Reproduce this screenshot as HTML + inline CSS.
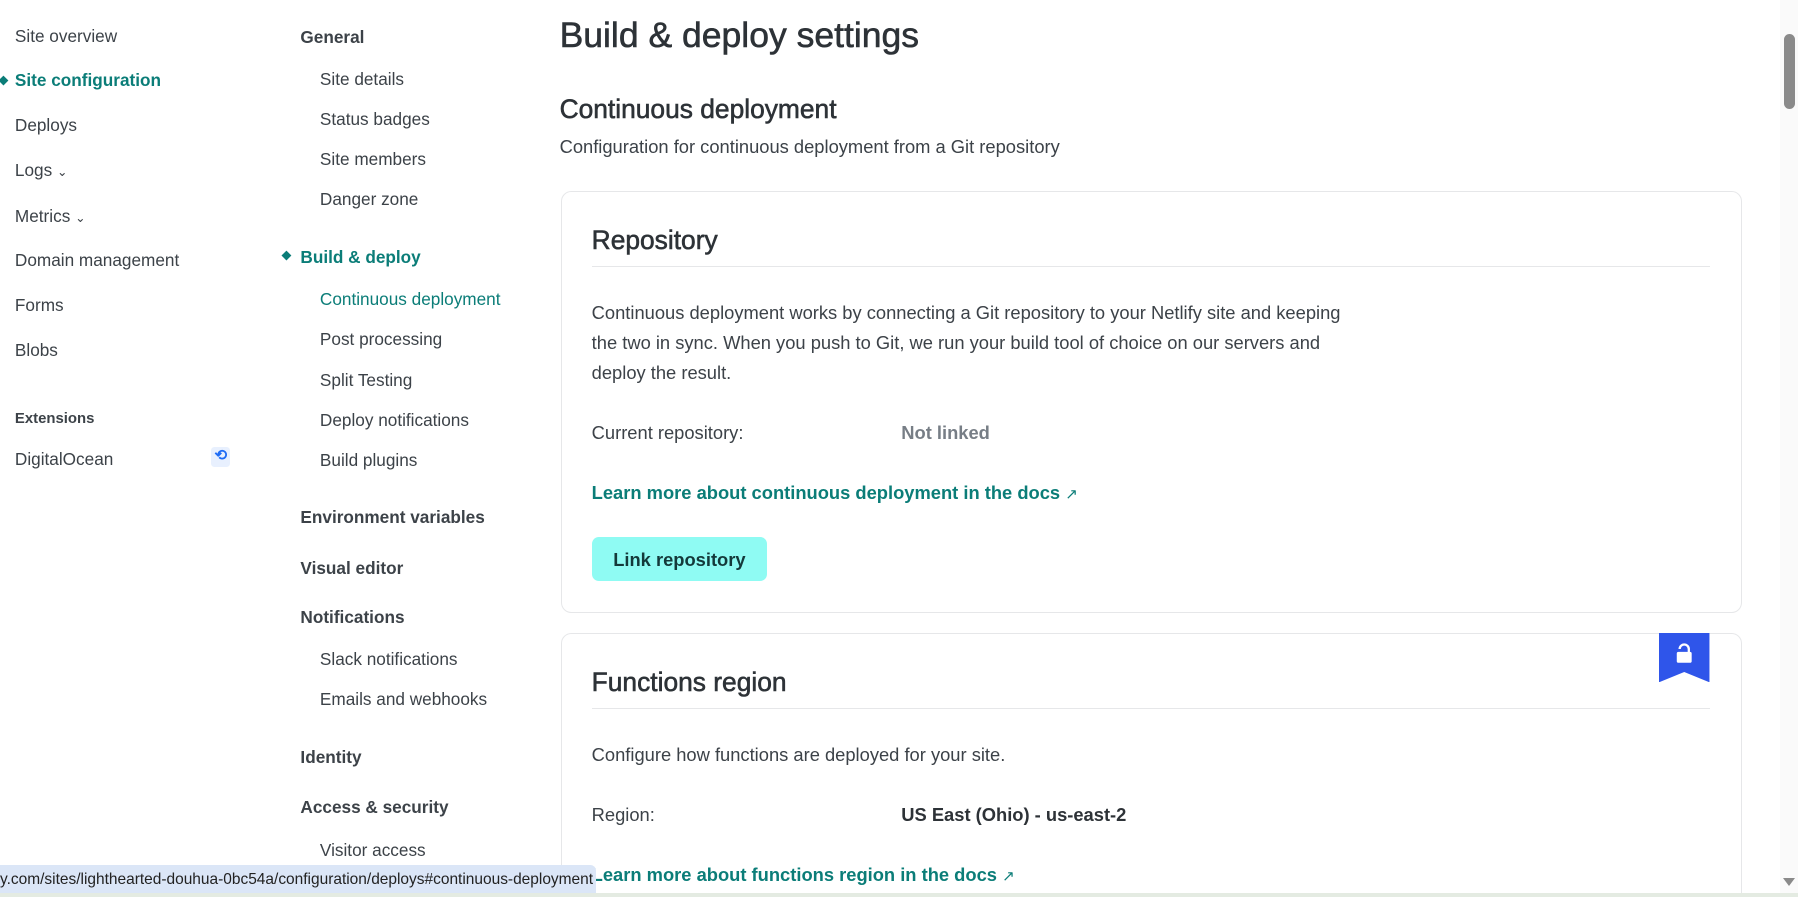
<!DOCTYPE html>
<html><head><meta charset="utf-8"><style>
html,body{margin:0;padding:0;background:#fff;overflow:hidden;width:1798px;height:897px}
#w{zoom:1.14668;width:1568px;height:782px;position:relative;font-family:"Liberation Sans",sans-serif;color:#353a40;overflow:hidden}
.a{position:absolute;white-space:nowrap;line-height:1}
.n1{font-size:15px;left:13px;color:#3c4248}
.n2{font-size:15px;left:279px;color:#3c4248}
.h{font-size:15px;left:262px;font-weight:bold;color:#3c4248}
.t{color:#0b7d78}
.card{position:absolute;left:489px;width:1028px;border:1px solid #e6e7e9;border-radius:9px;background:#fff}
.body{font-size:16px;color:#3c4248}
.link{font-size:16px;font-weight:bold;color:#0b7d78}
.hr{position:absolute;left:516px;width:975px;height:1px;background:#e6e7e9}
.dia{position:absolute;width:6px;height:6px;background:#0b7d78;transform:rotate(45deg)}
.sb{-webkit-text-stroke:0.5px #2d3237}
</style></head><body><div id="w">
<div class="a n1" style="top:24px">Site overview</div>
<div class="dia" style="left:0;top:67px"></div>
<div class="a n1 t" style="top:63px;font-weight:bold">Site configuration</div>
<div class="a n1" style="top:102px">Deploys</div>
<div class="a n1" style="top:141px">Logs <span style="font-size:11px">&#8964;</span></div>
<div class="a n1" style="top:181px">Metrics <span style="font-size:11px">&#8964;</span></div>
<div class="a n1" style="top:220px">Domain management</div>
<div class="a n1" style="top:259px">Forms</div>
<div class="a n1" style="top:298px">Blobs</div>
<div class="a n1" style="top:359px;font-size:13px;font-weight:bold">Extensions</div>
<div class="a n1" style="top:393px">DigitalOcean</div>
<div class="a" style="left:184px;top:390px;width:17px;height:17px;background:#e8f0fe;border-radius:3px;color:#1f6cf5;font-size:13px;font-weight:bold;text-align:center;line-height:17px">&#10226;</div>

<div class="a h" style="top:25px">General</div>
<div class="a n2" style="top:62px">Site details</div>
<div class="a n2" style="top:97px">Status badges</div>
<div class="a n2" style="top:132px">Site members</div>
<div class="a n2" style="top:167px">Danger zone</div>
<div class="dia" style="left:247px;top:220px"></div>
<div class="a h t" style="top:217px">Build &amp; deploy</div>
<div class="a n2 t" style="top:254px">Continuous deployment</div>
<div class="a n2" style="top:289px">Post processing</div>
<div class="a n2" style="top:324px">Split Testing</div>
<div class="a n2" style="top:359px">Deploy notifications</div>
<div class="a n2" style="top:394px">Build plugins</div>
<div class="a h" style="top:444px">Environment variables</div>
<div class="a h" style="top:488px">Visual editor</div>
<div class="a h" style="top:531px">Notifications</div>
<div class="a n2" style="top:568px">Slack notifications</div>
<div class="a n2" style="top:603px">Emails and webhooks</div>
<div class="a h" style="top:653px">Identity</div>
<div class="a h" style="top:697px">Access &amp; security</div>
<div class="a n2" style="top:734px">Visitor access</div>

<div class="a sb" style="left:488px;top:16px;font-size:31px;color:#2d3237">Build &amp; deploy settings</div>
<div class="a sb" style="left:488px;top:84px;font-size:23px;color:#2d3237">Continuous deployment</div>
<div class="a body" style="left:488px;top:120px">Configuration for continuous deployment from a Git repository</div>

<div class="card" style="top:167px;height:366px"></div>
<div class="a sb" style="left:516px;top:198px;font-size:23px;color:#2d3237">Repository</div>
<div class="hr" style="top:232px"></div>
<div class="a body" style="left:516px;top:260px;line-height:26px">Continuous deployment works by connecting a Git repository to your Netlify site and keeping<br>the two in sync. When you push to Git, we run your build tool of choice on our servers and<br>deploy the result.</div>
<div class="a body" style="left:516px;top:370px">Current repository:</div>
<div class="a body" style="left:786px;top:370px;font-weight:bold;color:#777e86">Not linked</div>
<div class="a link" style="left:516px;top:422px">Learn more about continuous deployment in the docs <span style="font-weight:normal;font-size:13px">&#8599;</span></div>
<div class="a" style="left:516px;top:468px;width:153px;height:39px;background:#8ffbf3;border-radius:6px;font-size:16px;font-weight:bold;color:#14393a;text-align:center;line-height:40px">Link repository</div>

<div class="card" style="top:552px;height:260px"></div>
<div class="a sb" style="left:516px;top:583px;font-size:23px;color:#2d3237">Functions region</div>
<div class="hr" style="top:617px"></div>
<div class="a body" style="left:516px;top:651px">Configure how functions are deployed for your site.</div>
<div class="a body" style="left:516px;top:703px">Region:</div>
<div class="a body" style="left:786px;top:703px;font-weight:bold;color:#2d3237">US East (Ohio) - us-east-2</div>
<div class="a link" style="left:516px;top:755px">Learn more about functions region in the docs <span style="font-weight:normal;font-size:13px">&#8599;</span></div>
<svg class="a" style="left:1447px;top:552px" width="44" height="43" viewBox="0 0 44 43"><path d="M0 0H44V43L22 34L0 43Z" fill="#2f55ea"/><path d="M18 14a4 4 0 0 1 8 0v3" stroke="#fff" stroke-width="2" fill="none"/><rect x="15.5" y="16.5" width="13" height="9.5" rx="1.5" fill="#fff"/></svg>

<div class="a" style="left:1552px;top:0;width:16px;height:782px;background:#fafafa"></div>
<div class="a" style="left:1556px;top:30px;width:9px;height:65px;background:#8a8a8a;border-radius:5px"></div>
<div class="a" style="left:1555px;top:766px;width:0;height:0;border-left:6px solid transparent;border-right:6px solid transparent;border-top:7px solid #8a8a8a"></div>
<div class="a" style="left:0;top:754px;width:520px;height:25px;background:#dbe6f7;border-top-right-radius:5px;font-size:13.5px;color:#222;line-height:26px">y.com/sites/lighthearted-douhua-0bc54a/configuration/deploys#continuous-deployment</div>
<div class="a" style="left:0;top:779px;width:1568px;height:3px;background:#e4ebe2"></div>
</div></body></html>
